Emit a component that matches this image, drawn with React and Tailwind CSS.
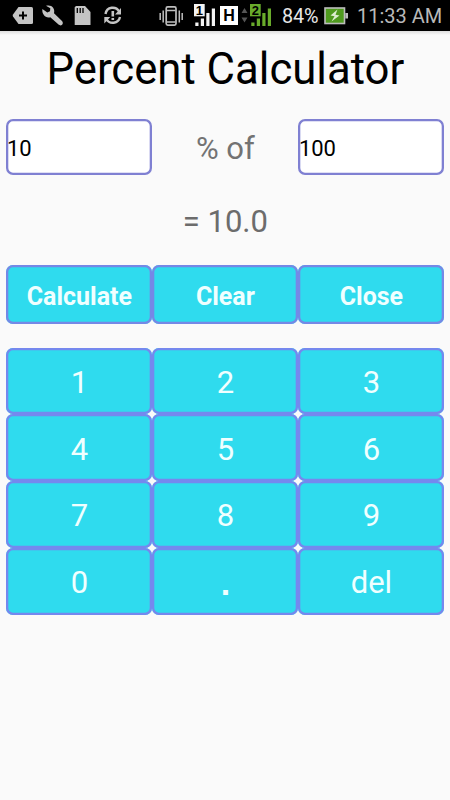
import { useState } from 'react'

const ACTIONS = ['Calculate', 'Clear', 'Close']
const KEYS = ['1', '2', '3', '4', '5', '6', '7', '8', '9', '0', '.', 'del']

function NotificationIcons() {
  return (
    <svg width="124" height="31" viewBox="0 0 124 31" fill="#c4c4c4">
      {/* Tag with plus */}
      <path d="M18.500 7H31.500a1.500 1.500 0 0 1 1.500 1.500V22.500a1.500 1.500 0 0 1-1.500 1.500H18.500L13 16.500a1.800 1.800 0 0 1 0-2z" />
      <path d="M23 11.500v8M19 15.500h8" stroke="#000" strokeWidth="2" />
      {/* Wrench */}
      <path d="M42.400 9l4.900 3.600 2.700-1.300.3-3-4.300-2.500c5.200-1.700 9.400 2.400 8 7.400l8 7.900c2.300 2.800-.7 5.700-3.500 3.500l-8.200-7.400c-4.900 1.300-8.700-3.200-7.900-8.200z" />
      {/* SD card */}
      <path d="M76 6h9l5.500 6V25H74.700V7.300z" />
      <path d="M77.300 8v5M80.200 8v5M83 8v5" stroke="#000" strokeWidth="1.300" />
      {/* Sync with warning */}
      <g fill="none" stroke="#c4c4c4" strokeWidth="2.400">
        <path d="M105.500 14c1.200-7.500 10.500-8.200 13.600-2.500M120 17c-1.500 6.800-10.500 7.800-13.600 2" />
        <path d="M112.800 11v5.500M112.800 18v2" strokeWidth="2.600" />
      </g>
      <path d="M121 8v6.500H115zM104.300 23.500v-6.500h6z" />
    </svg>
  )
}

function SignalBars({ label, color }) {
  return (
    <svg width="22" height="31" viewBox="0 0 22 31">
      <path d="M1.300 22.500h3.200V26h-3.200zM6.800 18.500h3.200V26h-3.200zM12.300 13h3.200v13h-3.200zM17.800 8.500h3.200V26h-3.200z" fill={color} />
      <rect x="0" y="4" width="10.700" height="12.300" fill={color} />
      <text x="5.300" y="14.500" textAnchor="middle" fontSize="13" fontWeight="700" fontFamily="Liberation Sans, sans-serif" fill="#000">
        {label}
      </text>
    </svg>
  )
}

function StatusBar() {
  return (
    <header className="flex h-[31px] shrink-0 items-center bg-black">
      <NotificationIcons />
      {/* Vibrate */}
      <svg className="ml-[35px]" width="25" height="31" viewBox="0 0 25 31" fill="none" stroke="#bebebe">
        <rect x="7.200" y="6.900" width="9.800" height="18.200" rx="1.500" strokeWidth="1.700" />
        <path d="M7.500 10.500h9M7.500 22h9" strokeWidth="1.500" />
        <path d="M4.200 10.500v12M20.300 10.500v12M1.200 13v7M23.200 13v7" strokeWidth="1.500" />
      </svg>
      <div className="ml-2.5 flex">
        <SignalBars label="1" color="#f4f4f4" />
      </div>
      <div className="ml-1 flex h-[19px] w-[18px] items-center justify-center bg-white font-['Liberation_Sans',sans-serif] text-[16px] leading-none font-bold text-black">
        H
      </div>
      <svg className="ml-[3px]" width="7" height="31" viewBox="0 0 7 31" fill="#555">
        <path d="M3.500 8l3 5h-6zM.500 17.500h6l-3 5z" />
      </svg>
      <div className="ml-0.5 flex">
        <SignalBars label="2" color="#69ab2b" />
      </div>
      <span className="ml-[10px] w-[38px] pt-[3px] text-[19.800px] tracking-[-0.100px] whitespace-nowrap text-[#e8e8e8]">84%</span>
      {/* Charging battery */}
      <svg className="ml-[4px]" width="25" height="31" viewBox="0 0 25 31">
        <rect x="1" y="8" width="19.500" height="15.500" fill="#4f9a1e" stroke="#bdbdbd" strokeWidth="1.600" />
        <rect x="21.300" y="13" width="2.700" height="5.500" fill="#bdbdbd" />
        <path d="M13.500 9.500L6.500 15.500l4 .7L7.500 21.500l8-6-4-.8z" fill="#dceccf" />
      </svg>
      <span className="ml-[8px] pt-px text-[20px] whitespace-nowrap text-[#b9b9b9]">11:33 AM</span>
    </header>
  )
}

export default function App() {
  const [percent, setPercent] = useState('10')
  const [amount, setAmount] = useState('100')
  const [result, setResult] = useState('10.0')
  const [active, setActive] = useState('percent')

  const update = active === 'percent' ? setPercent : setAmount

  const handleAction = (action) => {
    if (action === 'Calculate') {
      const value = (Number(percent) * Number(amount)) / 100
      setResult(Number.isInteger(value) ? value.toFixed(1) : String(value))
    } else if (action === 'Clear') {
      setPercent('')
      setAmount('')
      setResult('')
    }
  }

  const handleKey = (key) => {
    update((prev) => (key === 'del' ? prev.slice(0, -1) : prev + key))
  }

  return (
    <div className="flex h-[800px] w-[450px] flex-col overflow-hidden bg-[#fafafa] font-['Roboto',sans-serif]">
      <StatusBar />
      <div className="h-1 shrink-0 bg-linear-to-b from-[#dedede] to-[#fafafa]" />

      <main className="flex flex-col pr-[5.600px] pl-[6.400px]">
        <h1 className="mt-1 text-center text-[43.700px] leading-[60px] whitespace-nowrap text-black">Percent Calculator</h1>

        {/* Inputs */}
        <div className="mt-5 grid h-14 grid-cols-3 items-center">
          <input
            value={percent}
            onFocus={() => setActive('percent')}
            onChange={(e) => setPercent(e.target.value)}
            className="h-full w-full min-w-0 rounded-[7px] bg-white pt-[3px] pl-[0.500px] text-[22px] text-black shadow-[inset_0_0_0_2.300px_#7f80d2] outline-none"
          />
          <span className="pt-1 text-center text-[31px] text-[#737373]">% of</span>
          <input
            value={amount}
            onFocus={() => setActive('amount')}
            onChange={(e) => setAmount(e.target.value)}
            className="h-full w-full min-w-0 rounded-[7px] bg-white pt-[3px] pl-[0.500px] text-[22px] text-black shadow-[inset_0_0_0_2.300px_#7f80d2] outline-none"
          />
        </div>

        <p className="mt-[27px] h-10 text-center text-[31px] leading-10 text-[#6c6c6c]">= {result}</p>

        {/* Actions */}
        <div className="mt-[23px] grid h-[58.500px] grid-cols-3">
          {ACTIONS.map((action) => (
            <button
              key={action}
              onClick={() => handleAction(action)}
              className="rounded-[7px] bg-[#2fdbee] pt-1 text-[25px] font-bold text-[#f0ffff] shadow-[inset_0_0_0_2.300px_#7588e6]"
            >
              {action}
            </button>
          ))}
        </div>

        {/* Keypad */}
        <div className="mt-[24.200px] grid h-[267px] grid-cols-3 grid-rows-4">
          {KEYS.map((key) => (
            <button
              key={key}
              onClick={() => handleKey(key)}
              className={`rounded-[7px] bg-[#2fdbee] pt-1 text-[#f0ffff] shadow-[inset_0_0_0_2.300px_#7588ee] ${
                key === '.' ? "font-['Liberation_Sans',sans-serif] text-[34px] font-bold" : 'text-[31px]'
              }`}
            >
              {key}
            </button>
          ))}
        </div>
      </main>
    </div>
  )
}
